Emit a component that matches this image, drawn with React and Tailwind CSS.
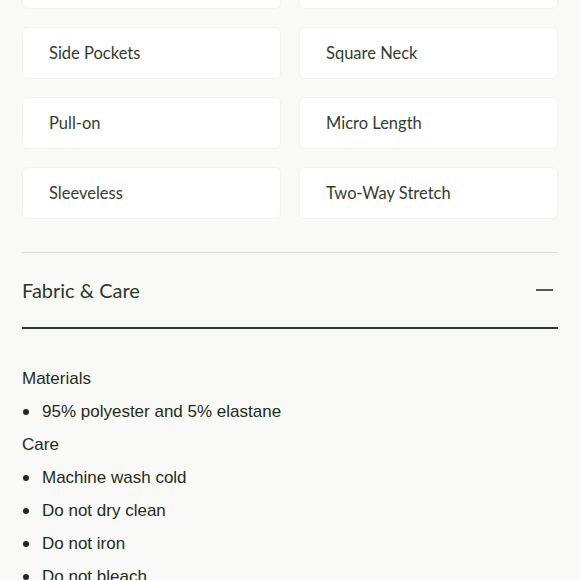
const features = [
  'Adjustable Straps',
  'Lined',
  'Side Pockets',
  'Square Neck',
  'Pull-on',
  'Micro Length',
  'Sleeveless',
  'Two-Way Stretch',
]

const care = ['Machine wash cold', 'Do not dry clean', 'Do not iron', 'Do not bleach', 'Hang to dry']

export default function App() {
  return (
    <div className="h-[580px] w-[580px] overflow-hidden bg-[#f9f9f8] px-[22px]">
      <div className="-mt-[43px] grid grid-cols-2 gap-x-[18px] gap-y-[18px]">
        {features.map((f) => (
          <div
            key={f}
            className="flex h-[52px] items-center rounded-[6px] border border-[#f3f3f1] bg-white pl-[26px] text-[16.5px] text-[#333d2f]"
            style={{ fontFamily: 'Lato, sans-serif' }}
          >
            {f}
          </div>
        ))}
      </div>

      <div className="mt-[33px] border-t border-[#dcdcda]">
        <div className="flex h-[74px] items-center justify-between">
          <span className="text-[20px] text-[#2b3a24]" style={{ fontFamily: 'Lato, sans-serif' }}>
            Fabric &amp; Care
          </span>
          <span className="mr-[5px] block h-[2px] w-[17px] bg-[#555a52]" />
        </div>
        <div className="h-[2px] bg-[#2f3a2a]" />
      </div>

      <div className="pt-[33px] text-[17px] leading-[33px] text-[#1e2c19]" style={{ fontFamily: '"Liberation Sans", Arial, sans-serif' }}>
        <div>Materials</div>
        <ul>
          <li className="flex items-center">
            <span className="ml-[1px] mr-[13px] h-[6px] w-[6px] rounded-full bg-[#1e2c19]" />
            95% polyester and 5% elastane
          </li>
        </ul>
        <div>Care</div>
        <ul>
          {care.map((c) => (
            <li key={c} className="flex items-center">
              <span className="ml-[1px] mr-[13px] h-[6px] w-[6px] rounded-full bg-[#1e2c19]" />
              {c}
            </li>
          ))}
        </ul>
      </div>
    </div>
  )
}
